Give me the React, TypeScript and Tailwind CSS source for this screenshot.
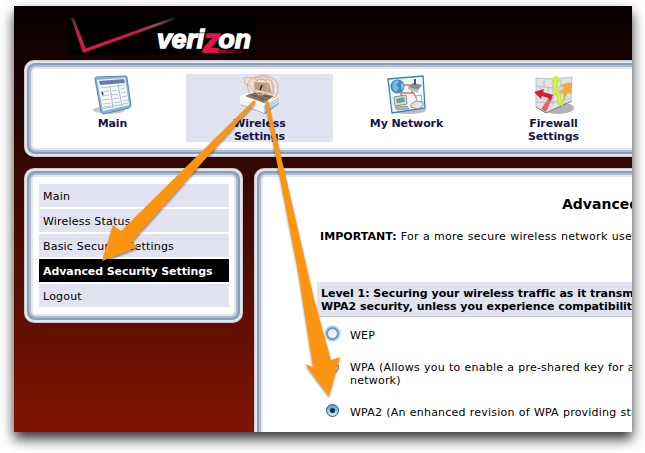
import type { ReactNode } from "react";

function Frame({ className, children }: { className: string; children: ReactNode }) {
  return (
    <div className={`flex rounded-[10px] bg-[#cbc9d3] p-px ${className}`}>
      <div className="flex grow rounded-[9px] bg-[#dfe7ef] p-[2px]">
        <div className="flex grow rounded-[8px] bg-[#8c9eb6] p-[2px]">
          <div className="flex grow rounded-[7px] bg-[#aebccd] p-[2px]">
            <div className="flex grow rounded-[5px] bg-[#e3e8ee] p-[2px]">
              <div className="grow rounded-[3px] bg-white">{children}</div>
            </div>
          </div>
        </div>
      </div>
    </div>
  );
}

function VerizonLogo() {
  return (
    <svg className="overflow-visible" width="188" height="40" viewBox="68 15 188 40" role="img">
      <defs>
        <linearGradient id="swooshShort" x1="0" y1="0" x2="0" y2="1">
          <stop offset="0" stopColor="#383838" />
          <stop offset=".4" stopColor="#d21845" />
        </linearGradient>
        <linearGradient id="swooshLong">
          <stop offset="0" stopColor="#dc164b" />
          <stop offset=".62" stopColor="#c51a42" />
          <stop offset=".8" stopColor="#845058" />
          <stop offset="1" stopColor="#181818" />
        </linearGradient>
        <linearGradient id="zTail">
          <stop offset="0" stopColor="#e01648" />
          <stop offset="1" stopColor="#240008" />
        </linearGradient>
      </defs>
      <rect x="68" y="15" width="188" height="40" fill="#000" />
      <path d="M71 18 L74 18 L86 49 L83 53Z" fill="url(#swooshShort)" />
      <path d="M83 53 L84 49 L174 17 L174 20Z" fill="url(#swooshLong)" />
      <path d="M207 50 H245 L242 53 H204Z" fill="url(#zTail)" />
      <g fontFamily="Liberation Sans, Arial, sans-serif" fontWeight="700" fontStyle="italic" fontSize="26.5" stroke="#fff" strokeWidth="1.5" fill="#fff">
        <text x="203" y="52.3" fontSize="34" fill="#e01648" stroke="#e01648">z</text>
        <text x="157" y="47.7">veri</text>
        <text x="218.5" y="47.7">on</text>
      </g>
    </svg>
  );
}

function MainIcon() {
  return (
    <svg width="40" height="40" viewBox="0 0 40 40">
      <ellipse cx="16" cy="35" rx="16" ry="4" fill="#c9c9cb" />
      <path d="M2 4 Q2 2 4 2 L32 1 Q34 1 34 3 L38 30 Q38 32 36 33 L11 39 Q9 39 8 37Z" fill="#8db3d5" stroke="#4f86b5" />
      <path d="M4 5 L32 3 L36 30 L10 36Z" fill="#f4f9fd" />
      <path d="M6 6 L31 4 L32 8 L7 10Z" fill="#6b7ca8" />
      <path d="M7 13 L32 10 M8 17 L16 16 M9 21 L16 20 M9 25 L17 24 M10 29 L18 28 M10 32 L18 31 M19 16 L24 15 M19 20 L25 19 M20 24 L26 23 M21 28 L27 27 M28 14 L32 13 M28 18 L33 17 M29 22 L34 21 M30 26 L35 25" stroke="#bcc8d4" />
      <path d="M17 11 L20 33 M25 10 L29 31 M9 34 L35 28" stroke="#a5bdd3" fill="none" />
      <path d="M9 17 l1 3" stroke="#323b50" strokeWidth="1.5" />
    </svg>
  );
}

function WirelessIcon() {
  return (
    <svg width="40" height="40" viewBox="0 0 40 40">
      <path d="M1 24 L24 33 L39 22 L39 29 L25 39 L1 30Z" fill="#8799ae" />
      <path d="M0 21 L14 16 L39 22 L24 31Z" fill="#fff" />
      <path d="M0 21 L24 31 L24 38 L0 29Z" fill="#f5f8fa" />
      <path d="M24 31 L39 22 L39 28 L24 38Z" fill="#c4d2e0" />
      <path d="M5 21 L15 17 L34 21 L24 28Z" fill="#8c7160" />
      <path d="M4 3 L8 2 L15 4 L31 5 L34 19 L14 17 L10 11 L5 9Z" fill="#efe2d5" stroke="#cbbbae" />
      <path d="M14 7 L29 8 L32 18 L15 15Z" fill="#b99c84" />
      <path d="M11 20 L27 25 M15 18 L31 22 M20 18 L14 22 M27 20 L21 25" stroke="#6b5c55" strokeWidth="1.3" />
      <g fill="none" stroke="#f0ab7f" strokeWidth="1.1">
        <ellipse cx="21" cy="12" rx="7" ry="8" />
        <path d="M10 18 C4 10 10 0 20 2 C34 1 36 13 31 21" />
        <path d="M14 4 C22 -3 39 1 38 14 C38 20 35 23 32 24" />
      </g>
      <path d="M22 10 l-2 5" stroke="#33251f" strokeWidth="1.5" />
    </svg>
  );
}

function NetworkIcon() {
  return (
    <svg width="40" height="40" viewBox="0 0 40 40">
      <ellipse cx="22" cy="35" rx="17" ry="4" fill="#b9bdc1" />
      <path d="M1 4 L36 1 L38 33 L5 38Z" fill="#f1f7fb" stroke="#3583c6" strokeWidth="1.3" />
      <path d="M17 10 H25 V18 H14 V23 M26 17 L30 24" stroke="#e9705b" strokeWidth="1.5" fill="none" />
      <circle cx="10.5" cy="11.5" r="7" fill="#398cc8" />
      <path d="M6 8 Q11 3 12 7 L9 10 L12 13 L9 17 Q4 14 6 8 M14 8 l3 1 v4 l-3 2Z" fill="#80bdda" />
      <path d="M21 12 L26 8 L35 10 L31 15Z" fill="#858d92" />
      <path d="M21 12 L31 15 V18 L21 14Z" fill="#b9c0c4" />
      <path d="M28 10 V4" stroke="#505960" strokeWidth="2" />
      <path d="M7 22 L19 20 L20 29 L8 31Z" fill="#d7ddd9" stroke="#89928f" />
      <path d="M9 24 L17 22 L18 27 L10 28Z" fill="#689fa1" />
      <path d="M8 32 L20 31 L22 34 L10 35Z" fill="#aeb8b9" stroke="#7c8585" strokeWidth=".7" />
      <path d="M29 21 L34 20 L35 27 L30 28Z" fill="#fff" stroke="#aaa" />
      <path d="M24 29 L29 26 L36 27 L36 31 L31 34 L24 32Z" fill="#e5e4dd" stroke="#959892" />
    </svg>
  );
}

function FirewallIcon() {
  return (
    <svg width="42" height="40" viewBox="0 0 42 40">
      <ellipse cx="25" cy="33" rx="16" ry="6" fill="#b3b2b1" />
      <path d="M3 3 L20 4 L39 2 L38 25 L13 38 L3 32Z" fill="#dde3e7" stroke="#aeb9c2" strokeWidth=".8" />
      <path d="M3 11 L20 13 L39 10 M3 19 L20 20 L38 18 M3 27 L18 28 L38 23 M11 5 V12 M8 12 V19 M15 13 V20 M11 20 V27 M28 5 V12 M33 11 V18 M27 12 V20 M20 6 V30" fill="none" stroke="#b6c0c9" />
      <path d="M3 32 L13 38 L39 26" fill="none" stroke="#758492" />
      <path d="M8 34 L15 24 L18 22 L20 22 L13 37Z" fill="#e5666c" />
      <path d="M1 17 L11 14 L10 17 L20 20 L17 26 L15 23 L9 21 L8 24Z" fill="#d91f2a" />
      <path d="M29 29 L35 17 L38 19 L39 7 L27 10 L31 13 L26 17 L31 19Z" fill="#f3a83b" />
      <path d="M19 7 Q19 1 24 1 L27 5 L25 8 Q23 14 28 20 L30 31 L24 29 L24 22 Q17 14 22 8Z" fill="#c7ed31" />
      <path d="M23 4 Q20 14 26 20 L27 28" fill="none" stroke="#e9f978" />
    </svg>
  );
}

type NavItem = { label: string[]; icon: ReactNode; active?: boolean };

const navItems: NavItem[] = [
  { label: ["Main"], icon: <MainIcon /> },
  { label: ["Wireless", "Settings"], icon: <WirelessIcon />, active: true },
  { label: ["My Network"], icon: <NetworkIcon /> },
  { label: ["Firewall", "Settings"], icon: <FirewallIcon /> },
];

const menuItems = ["Main", "Wireless Status", "Basic Security Settings", "Advanced Security Settings", "Logout"];

function Radio({ state = "off" }: { state?: "off" | "focused" | "checked" }) {
  if (state === "checked") {
    return (
      <span className="flex size-[13px] items-center justify-center rounded-full border border-[#315782] bg-linear-to-b from-[#5a98d8] to-[#c7f2ff]">
        <span className="size-[5px] rounded-full bg-[#102b4c]" />
      </span>
    );
  }
  if (state === "focused") {
    return <span className="size-[13px] rounded-full border-2 border-[#6998c9] bg-linear-to-b from-[#e2e5e8] to-white shadow-[0_0_2px_1px_#82b4e4]" />;
  }
  return <span className="mt-[2px] size-[13px] rounded-full border border-[#777] bg-linear-to-b from-[#d5d5d5] to-white" />;
}

function Arrows() {
  return (
    <svg className="pointer-events-none absolute top-0 left-0 drop-shadow-[0_2px_1px_rgba(0,0,0,0.4)]" width="645" height="453" viewBox="0 0 645 453">
      <path d="M254 100 L256 102 L131.5 242 L138 247 L102 261 L113 225 L121 231Z" fill="#ff9410" />
      <path d="M265 101 L268 100 L314 299 L331 360 L340 357 L329 396 L305 364 L313 367 L298 271Z" fill="#ff9410" />
    </svg>
  );
}

export default function App() {
  return (
    <div className="relative h-[453px] w-[645px] overflow-hidden bg-white pt-[6px] pl-[14px] font-['DejaVu_Sans',Verdana,sans-serif] text-[11px] leading-[13px] text-black">
      <div className="flex h-[426px] w-[618px] flex-col overflow-hidden bg-[linear-gradient(to_bottom,#060000,#801400)] shadow-[0_7px_12px_rgba(0,0,0,0.8)]">
        <header className="h-[54px] shrink-0 pt-[9px] pl-[54px]">
          <VerizonLogo />
        </header>
        <Frame className="ml-[10px] h-[97px] w-[740px] shrink-0">
          <nav className="flex pt-[5px] pl-[6px]">
            {navItems.map((item) => (
              <div key={item.label[0]} className={`flex h-[68px] w-[147px] flex-col items-center pt-px ${item.active ? "bg-[#e1e4f0]" : ""}`}>
                <div className="shrink-0">{item.icon}</div>
                <div className="mt-[2px] text-center font-bold tracking-[-0.1px] text-[#15154b]">
                  {item.label.map((line) => <div key={line}>{line}</div>)}
                </div>
              </div>
            ))}
          </nav>
        </Frame>
        <div className="mt-[11px] flex gap-[11px] pl-[10px]">
          <Frame className="h-[155px] w-[219px] shrink-0">
            <ul className="flex flex-col gap-[2px] pt-[7px] pr-[5px] pl-[6px]">
              {menuItems.map((item) => (
                <li key={item} className={`h-[23px] pt-[6px] pl-[4px] whitespace-nowrap ${item === "Advanced Security Settings" ? "bg-black font-bold tracking-[-0.08px] text-white" : "bg-[#e1e4f0] tracking-[0.2px]"}`}>
                  {item}
                </li>
              ))}
            </ul>
          </Frame>
          <Frame className="h-[300px] w-[720px] shrink-0">
            <main className="pl-[54px] whitespace-nowrap">
              <h1 className="pt-[18px] pl-[245px] text-[14px] leading-[18px] font-bold">Advanced Security Settings</h1>
              <p className="mt-[17px] pl-[3px] tracking-[0.28px] [word-spacing:0.35px]"><b className="tracking-[0.05px]">IMPORTANT:</b> For a more secure wireless network use</p>
              <section className="mt-[39px] h-[35px] border-b border-[#c6c9d1] bg-[#e1e4f0] pt-[5px] pl-[4px] font-bold">
                <div className="tracking-[-0.03px]">Level 1: Securing your wireless traffic as it transmits</div>
                <div className="tracking-[-0.04px]">WPA2 security, unless you experience compatibility</div>
              </section>
              <div className="grid grid-cols-[24px_1fr] pt-[10px] pl-[9px] tracking-[0.22px] [word-spacing:0.35px]">
                <Radio state="focused" />
                <div className="h-[32px] pt-[2px]">WEP</div>
                <Radio />
                <div className="h-[45px] pt-[2px]">WPA (Allows you to enable a pre-shared key for a<br />network)</div>
                <Radio state="checked" />
                <div className="pt-[2px]">WPA2 (An enhanced revision of WPA providing stronger</div>
              </div>
            </main>
          </Frame>
        </div>
      </div>
      <Arrows />
    </div>
  );
}
